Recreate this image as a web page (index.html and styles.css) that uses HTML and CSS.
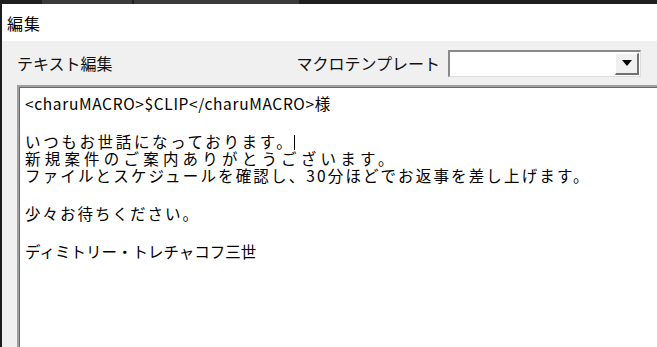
FILE: index.html
```html
<!DOCTYPE html>
<html lang="ja">
<head>
  <meta charset="UTF-8">
  <meta name="viewport" content="width=device-width, initial-scale=1.0">
  <title>編集</title>
  <link rel="stylesheet" href="styles.css">
</head>
<body>
  <div class="window">
    <div class="top-strip">
      <div class="tab tab-one"></div>
      <div class="tab tab-two"></div>
    </div>
    <div class="title-bar">編集</div>

    <div class="panel">
      <div class="toolbar">
        <span class="label">テキスト編集</span>
        <div class="macro-group">
          <span class="label">マクロテンプレート</span>
          <div class="combo">
            <div class="combo-value"></div>
            <div class="combo-arrow">
              <svg width="10" height="6" viewBox="0 0 10 6"><path d="M0 0h10L5 6z" fill="#000"/></svg>
            </div>
          </div>
        </div>
      </div>

      <div class="editor">
        <div class="para">
          <div class="line line-ascii">&lt;charuMACRO&gt;$CLIP&lt;/charuMACRO&gt;様</div>
        </div>
        <div class="para">
          <div class="line line-greeting">いつもお世話になっております。<span class="caret"></span></div>
          <div class="line line-thanks">新規案件のご案内ありがとうございます。</div>
          <div class="line line-long">ファイルとスケジュールを確認し、30分ほどでお返事を差し上げます。</div>
        </div>
        <div class="para">
          <div class="line line-wait">少々お待ちください。</div>
        </div>
        <div class="para">
          <div class="line line-sign">ディミトリー・トレチャコフ三世</div>
        </div>
      </div>
    </div>
  </div>
</body>
</html>
```

FILE: styles.css
```css
* {
  box-sizing: border-box;
}

body {
  margin: 0;
  background: #fff;
  font-family: "Noto Sans CJK JP", sans-serif;
  font-size: 16px;
  color: #000;
  overflow: hidden;
}

.window {
  height: 100vh;
  display: flex;
  flex-direction: column;
  border-left: 2px solid #1e1e1e;
}

/* dark strip of the parent window's tabs */
.top-strip {
  height: 4px;
  background: #1f1f1f;
  display: flex;
  padding-left: 40px;
}

.tab {
  height: 100%;
  background: #3a3a3a;
}

.tab-one { width: 90px; }
.tab-two { width: 165px; margin-left: 2px; }

.title-bar {
  height: 37px;
  display: flex;
  align-items: center;
  padding-left: 5px;
  line-height: 1;
  letter-spacing: 1px;
}

.panel {
  flex: 1;
  display: flex;
  flex-direction: column;
  background: #f0f0f0;
  padding-left: 15px;
}

.toolbar {
  height: 44px;
  display: flex;
  align-items: center;
  justify-content: space-between;
  padding-right: 16px;
}

.label {
  line-height: 1;
  color: #111;
}

.macro-group {
  display: flex;
  align-items: center;
  gap: 8px;
}

.combo {
  width: 193px;
  height: 27px;
  display: flex;
  background: #fff;
  border-top: 2px solid #8a8a8a;
  border-left: 2px solid #8a8a8a;
  border-right: 1px solid #dcdcdc;
  border-bottom: 1px solid #dcdcdc;
  padding: 1px 1px 1px 0;
}

.combo-value {
  flex: 1;
}

.combo-arrow {
  width: 24px;
  display: flex;
  align-items: center;
  justify-content: center;
  background: #f0f0f0;
  border-top: 1px solid #fff;
  border-left: 1px solid #fff;
  border-right: 2px solid #707070;
  border-bottom: 2px solid #707070;
}

.editor {
  flex: 1;
  margin-right: -10px;
  background: #fff;
  border-top: 2px solid #a0a0a0;
  border-left: 2px solid #a0a0a0;
  box-shadow: inset 1px 1px 0 #696969;
  padding: 8px 6px;
}

.para {
  margin-bottom: 21px;
}

.line {
  height: 17px;
  line-height: 17px;
  font-size: 15.5px;
  white-space: nowrap;
}

/* the original font has proportional kana, so widths differ per line */
.line-ascii { letter-spacing: 0.65px; }
.line-greeting { letter-spacing: 2.65px; }
.line-thanks { letter-spacing: 4.2px; }
.line-long { letter-spacing: 2.15px; }
.line-wait { letter-spacing: 2px; }
.line-sign { letter-spacing: 0; }

.caret {
  display: inline-block;
  width: 1px;
  height: 15px;
  background: #000;
  vertical-align: -2px;
}
```
